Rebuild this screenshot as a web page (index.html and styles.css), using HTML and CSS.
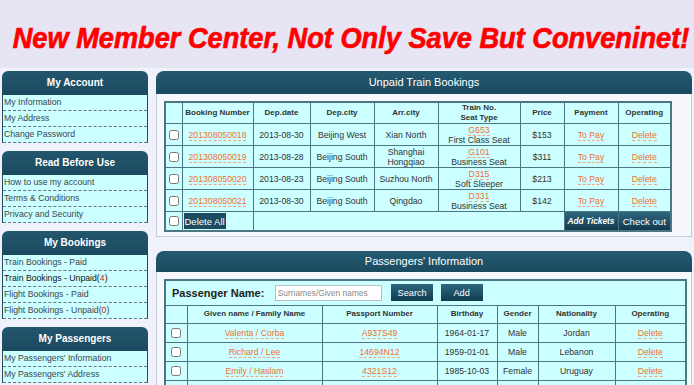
FILE: index.html
```html
<!DOCTYPE html>
<html lang="en">
<head>
    <meta charset="UTF-8">
    <meta name="viewport" content="width=device-width, initial-scale=1.0">
    <link rel="stylesheet" href="styles.css">
</head>
<body>
    <div class="top">
        <h1 class="slogan">New Member Center, Not Only Save But Conveninet!</h1>
    </div>

    <div class="page">
        <div class="sidebar">
            <div class="side-box">
                <h3>My Account</h3>
                <ul>
                    <li><a href="#">My Information</a></li>
                    <li><a href="#">My Address</a></li>
                    <li><a href="#">Change Password</a></li>
                </ul>
            </div>
            <div class="side-box">
                <h3>Read Before Use</h3>
                <ul>
                    <li><a href="#">How to use my account</a></li>
                    <li><a href="#">Terms &amp; Conditions</a></li>
                    <li><a href="#">Privacy and Security</a></li>
                </ul>
            </div>
            <div class="side-box">
                <h3>My Bookings</h3>
                <ul>
                    <li><a href="#">Train Bookings - Paid</a></li>
                    <li class="current"><a href="#">Train Bookings - Unpaid(<span class="count">4</span>)</a></li>
                    <li><a href="#">Flight Bookings - Paid</a></li>
                    <li><a href="#">Flight Bookings - Unpaid(<span class="count">0</span>)</a></li>
                </ul>
            </div>
            <div class="side-box">
                <h3>My Passengers</h3>
                <ul>
                    <li><a href="#">My Passengers' Information</a></li>
                    <li><a href="#">My Passengers' Address</a></li>
                </ul>
            </div>
        </div>

        <div class="main">
            <div class="panel">
                <h2>Unpaid Train Bookings</h2>
                <div class="panel-body">
                    <table class="grid bookings">
                        <colgroup>
                            <col style="width:17px"><col style="width:71px"><col style="width:57px">
                            <col style="width:64px"><col style="width:64px"><col style="width:82px">
                            <col style="width:44px"><col style="width:54px"><col style="width:53px">
                        </colgroup>
                        <tr class="head">
                            <th></th>
                            <th>Booking Number</th>
                            <th>Dep.date</th>
                            <th>Dep.city</th>
                            <th>Arr.city</th>
                            <th>Train No.<br>Seat Type</th>
                            <th>Price</th>
                            <th>Payment</th>
                            <th>Operating</th>
                        </tr>
                        <tr>
                            <td><input type="checkbox"></td>
                            <td><a href="#">201308050018</a></td>
                            <td>2013-08-30</td>
                            <td>Beijing West</td>
                            <td>Xian North</td>
                            <td><a href="#">G653</a><br>First Class Seat</td>
                            <td>$153</td>
                            <td><a href="#">To Pay</a></td>
                            <td><a href="#">Delete</a></td>
                        </tr>
                        <tr>
                            <td><input type="checkbox"></td>
                            <td><a href="#">201308050019</a></td>
                            <td>2013-08-28</td>
                            <td>Beijing South</td>
                            <td>Shanghai<br>Hongqiao</td>
                            <td><a href="#">G101</a><br>Business Seat</td>
                            <td>$311</td>
                            <td><a href="#">To Pay</a></td>
                            <td><a href="#">Delete</a></td>
                        </tr>
                        <tr>
                            <td><input type="checkbox"></td>
                            <td><a href="#">201308050020</a></td>
                            <td>2013-08-23</td>
                            <td>Beijing South</td>
                            <td>Suzhou North</td>
                            <td><a href="#">D315</a><br>Soft Sleeper</td>
                            <td>$213</td>
                            <td><a href="#">To Pay</a></td>
                            <td><a href="#">Delete</a></td>
                        </tr>
                        <tr>
                            <td><input type="checkbox"></td>
                            <td><a href="#">201308050021</a></td>
                            <td>2013-08-30</td>
                            <td>Beijing South</td>
                            <td>Qingdao</td>
                            <td><a href="#">D331</a><br>Business Seat</td>
                            <td>$142</td>
                            <td><a href="#">To Pay</a></td>
                            <td><a href="#">Delete</a></td>
                        </tr>
                        <tr class="foot">
                            <td><input type="checkbox"></td>
                            <td class="left"><button class="btn-del">Delete All</button></td>
                            <td colspan="5"></td>
                            <td class="btn-cell"><button class="btn btn-add">Add Tickets</button></td>
                            <td class="btn-cell"><button class="btn btn-check">Check out</button></td>
                        </tr>
                    </table>
                </div>
            </div>

            <div class="panel">
                <h2>Passengers' Information</h2>
                <div class="panel-body">
                    <table class="grid passengers">
                        <colgroup>
                            <col style="width:22px"><col style="width:135px"><col style="width:115px">
                            <col style="width:60px"><col style="width:41px"><col style="width:77px">
                            <col style="width:71px">
                        </colgroup>
                        <tr class="search">
                            <td colspan="7">
                                <label for="pname">Passenger Name:</label>
                                <input type="text" id="pname" placeholder="Surnames/Given names">
                                <button class="btn btn-small">Search</button>
                                <button class="btn btn-small">Add</button>
                            </td>
                        </tr>
                        <tr class="head">
                            <th></th>
                            <th>Given name / Family Name</th>
                            <th>Passport Number</th>
                            <th>Birthday</th>
                            <th>Gender</th>
                            <th>Nationality</th>
                            <th>Operating</th>
                        </tr>
                        <tr>
                            <td><input type="checkbox"></td>
                            <td><a href="#">Valenta / Corba</a></td>
                            <td><a href="#">A937S49</a></td>
                            <td>1964-01-17</td>
                            <td>Male</td>
                            <td>Jordan</td>
                            <td><a href="#">Delete</a></td>
                        </tr>
                        <tr>
                            <td><input type="checkbox"></td>
                            <td><a href="#">Richard / Lee</a></td>
                            <td><a href="#">14694N12</a></td>
                            <td>1959-01-01</td>
                            <td>Male</td>
                            <td>Lebanon</td>
                            <td><a href="#">Delete</a></td>
                        </tr>
                        <tr>
                            <td><input type="checkbox"></td>
                            <td><a href="#">Emily / Haslam</a></td>
                            <td><a href="#">4321S12</a></td>
                            <td>1985-10-03</td>
                            <td>Female</td>
                            <td>Uruguay</td>
                            <td><a href="#">Delete</a></td>
                        </tr>
                        <tr>
                            <td><input type="checkbox"></td>
                            <td></td>
                            <td></td>
                            <td></td>
                            <td></td>
                            <td></td>
                            <td></td>
                        </tr>
                    </table>
                </div>
            </div>
        </div>
    </div>
</body>
</html>
```

FILE: styles.css
```css
body {
    margin: 0;
    background-color: #eff1fb;
    font-family: "Liberation Sans", Arial, sans-serif;
    font-size: 8.7px;
    color: #333;
    overflow: hidden;
}

.top {
    height: 68px;
    background-color: #e7e4f4;
    overflow: hidden;
}

/* the text is drawn wide and squeezed to the banner width */
.slogan {
    width: 748px;
    margin: 0 0 0 -23px;
    padding-top: 23px;
    font-size: 30px;
    line-height: 30px;
    font-weight: bold;
    font-style: italic;
    text-align: center;
    color: #ff0000;
    white-space: nowrap;
    transform: scaleX(0.906);
    -webkit-text-stroke: 0.7px #ff0000;
}

.page {
    display: flex;
    align-items: flex-start;
    gap: 8px;
    padding: 3px 2px 0 2px;
}

/* left menu */
.sidebar {
    width: 146px;
    flex: none;
}

.side-box {
    margin-bottom: 8px;
}

.side-box h3 {
    margin: 0;
    height: 24px;
    line-height: 24px;
    background: linear-gradient(#22566d, #1b4a5f);
    color: #fff;
    font-size: 10px;
    text-align: center;
    border-radius: 6px 6px 0 0;
}

.side-box ul {
    list-style: none;
    margin: 0;
    padding: 0;
    background-color: #ccffff;
    border-left: 1px solid #1f4f65;
    border-right: 1px solid #1f4f65;
}

.side-box li {
    height: 15px;
    line-height: 15px;
    padding-left: 1px;
    border-bottom: 1px dashed #68777f;
    white-space: nowrap;
}

.side-box a {
    color: #3a464d;
    text-decoration: none;
}

.side-box li.current a {
    color: #111;
}

.count {
    color: #e01010;
}

/* panels */
.main {
    width: 536px;
    flex: none;
}

.panel {
    margin-bottom: 14px;
}

.panel h2 {
    margin: 0;
    height: 23px;
    line-height: 23px;
    background: linear-gradient(#245a71, #1b4a5f);
    color: #fff;
    font-size: 11px;
    font-weight: normal;
    text-align: center;
    border-radius: 8px 8px 0 0;
}

.panel + .panel h2 {
    height: 21px;
    line-height: 21px;
}

.panel-body {
    background-color: #f5f7fd;
    border: 1px solid #c9ccd8;
    border-top: none;
    padding: 7px 0 4px 7px;
}

.grid {
    border-collapse: collapse;
    table-layout: fixed;
    border: 2px solid #4c7782;
}

.bookings {
    width: 506px;
}

.passengers {
    width: 521px;
}

.grid th,
.grid td {
    border: 1px solid #4c7782;
    background-color: #ccffff;
    padding: 0;
    text-align: center;
    vertical-align: middle;
    line-height: 10px;
    white-space: nowrap;
    overflow: hidden;
}

.grid th {
    font-size: 8px;
    font-weight: bold;
    color: #333;
}

.grid a {
    color: #f2702f;
    text-decoration: none;
    border-bottom: 1px dashed #f5a57c;
}

.grid input[type="checkbox"] {
    width: 10px;
    height: 10px;
    margin: 0;
    vertical-align: middle;
}

.bookings tr {
    height: 22px;
}

.bookings tr.head {
    height: 20px;
}

.bookings tr.foot {
    height: 18px;
}

.grid td.left {
    text-align: left;
    padding: 1px 0 1px 1px;
}

.btn-del {
    display: block;
    height: 16px;
    padding: 0 1px;
    border: none;
    background-color: #1d4b60;
    color: #fff;
    font-family: "Liberation Sans", Arial, sans-serif;
    font-size: 9.5px;
}

.grid td.btn-cell {
    padding: 0;
}

.btn {
    border: 1px solid #8fb0bc;
    background: linear-gradient(#2f6780, #123a4e);
    color: #fff;
    font-family: "Liberation Sans", Arial, sans-serif;
    cursor: pointer;
}

.btn-add,
.btn-check {
    display: block;
    width: 100%;
    height: 18px;
    padding: 0;
    border: none;
}

.btn-add {
    font-size: 8.3px;
    font-weight: bold;
    font-style: italic;
}

.btn-check {
    font-size: 9.6px;
}

.passengers tr {
    height: 19px;
}

.passengers tr.head {
    height: 18px;
}

.passengers tr.search {
    height: 25px;
}

.grid tr.search td {
    text-align: left;
    padding-left: 6px;
}

.search label {
    font-size: 11px;
    font-weight: bold;
    color: #222;
    vertical-align: middle;
}

.search input[type="text"] {
    width: 101px;
    height: 12px;
    margin: 0 7px 0 8px;
    padding: 1px 2px;
    border: 1px solid #b9c0c4;
    background-color: #fff;
    font-family: "Liberation Sans", Arial, sans-serif;
    font-size: 8.4px;
    vertical-align: middle;
}

.search input::placeholder {
    color: #8a8a8a;
}

.btn-small {
    width: 42px;
    height: 17px;
    margin-right: 5px;
    padding: 0;
    border: none;
    font-size: 9.2px;
    vertical-align: middle;
}
```
